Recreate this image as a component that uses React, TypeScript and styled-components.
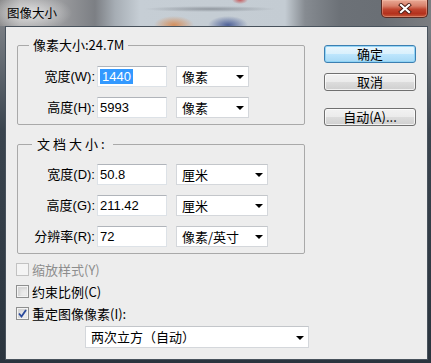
import React from "react";
import styled, { createGlobalStyle, css } from "styled-components";

const GlobalStyle = createGlobalStyle`
  html, body {
    margin: 0;
    padding: 0;
  }
  body {
    width: 431px;
    height: 363px;
    overflow: hidden;
    background: #2b3540;
    font-family: "Liberation Sans", "Noto Sans CJK SC", sans-serif;
    font-size: 13px;
    color: #000;
  }
`;

const Window = styled.div`
  width: 431px;
  height: 363px;
  display: flex;
  flex-direction: column;
  background: linear-gradient(
    to bottom,
    #8a8c8f 0,
    #6b7178 50px,
    #3a444e 130px,
    #2a343e 100%
  );
`;

const TitleBar = styled.div`
  height: 26px;
  flex: none;
  display: flex;
  align-items: flex-start;
  justify-content: space-between;
  background:
    radial-gradient(ellipse 42px 18px at 30px 13px, rgba(235, 235, 235, 0.85), rgba(235, 235, 235, 0)),
    radial-gradient(ellipse 20px 9px at 174px 25px, rgba(214, 140, 86, 0.95), rgba(214, 140, 86, 0)),
    radial-gradient(ellipse 20px 9px at 228px 25px, rgba(66, 86, 146, 0.9), rgba(66, 86, 146, 0)),
    radial-gradient(ellipse 8px 4px at 240px 0px, rgba(200, 60, 60, 0.8), rgba(200, 60, 60, 0)),
    radial-gradient(ellipse 66px 3px at 210px 9px, rgba(110, 116, 124, 0.6), rgba(110, 116, 124, 0)),
    linear-gradient(
      to right,
      #8c8c8d 0,
      #a9a9aa 20px,
      #9a9b9e 60px,
      #7c7f84 95px,
      #a6adb4 115px,
      #c6ced5 140px,
      #c4ccd3 285px,
      #868b91 305px,
      #6c7177 340px,
      #6a6f75 380px,
      #7b7d80 431px
    );
`;

const Title = styled.span`
  margin: 5px 0 0 7px;
  font-family: "Noto Sans CJK SC", sans-serif;
  font-size: 12.5px;
  line-height: 16px;
  color: #000;
`;

const CloseButton = styled.div`
  width: 47px;
  height: 18px;
  margin-right: 3px;
  box-sizing: border-box;
  border: 1px solid #5a2a22;
  border-top: none;
  border-radius: 0 0 5px 5px;
  display: flex;
  align-items: center;
  justify-content: center;
  background: linear-gradient(
    to bottom,
    #e9a995 0,
    #d8806a 35%,
    #c0452f 55%,
    #b4311d 80%,
    #c45a3c 100%
  );
  box-shadow: inset 0 0 0 1px rgba(255, 210, 190, 0.35);
`;

const Client = styled.div`
  flex: 1;
  margin: 0 3px 3px 5px;
  border: 1px solid #48525c;
  background: #ededed;
  display: flex;
`;

const MainColumn = styled.div`
  padding: 10px 0 0 11px;
  width: 288px;
  display: flex;
  flex-direction: column;
`;

const Group = styled.fieldset`
  margin: 0;
  padding: 13px 0 6px 0;
  width: 288px;
  box-sizing: border-box;
  border: 1px solid #a9a9a9;
  border-radius: 2px;
  display: flex;
  flex-direction: column;
  gap: 10px;

  & + & {
    margin-top: 11px;
    padding-top: 12px;
  }
`;

const Legend = styled.legend<{ $spaced?: boolean }>`
  margin-left: ${(p) => (p.$spaced ? 14 : 11)}px;
  padding: 0 ${(p) => (p.$spaced ? 5 : 4)}px;
  font-family: "Noto Sans CJK SC", sans-serif;
  font-size: 13px;
  line-height: 16px;
  letter-spacing: ${(p) => (p.$spaced ? "3px" : "0")};
  color: #000;
`;

const Row = styled.div`
  display: flex;
  align-items: center;
  height: 21px;
`;

const Label = styled.span`
  width: 77px;
  margin-right: 2px;
  text-align: right;
  font-family: "Liberation Sans", "Noto Sans CJK SC", sans-serif;
  font-size: 13px;
  line-height: 16px;
  white-space: nowrap;
`;

const Field = styled.div`
  width: 70px;
  height: 21px;
  box-sizing: border-box;
  margin-right: 9px;
  padding-left: 2px;
  background: #fff;
  border: 1px solid #dde2e7;
  border-top-color: #b0b4ba;
  display: flex;
  align-items: center;
  font-size: 13px;
  line-height: 15px;
`;

const Selected = styled.span`
  background: #3399ff;
  color: #fff;
  padding: 0 2px;
`;

const FieldText = styled.span`
  padding-left: 0;
`;

const Select = styled.div<{ $width: number }>`
  width: ${(p) => p.$width}px;
  height: ${(p) => (p.$width > 200 ? 22 : 21)}px;
  box-sizing: border-box;
  padding: 0 4px 0 5px;
  background: #fff;
  border: 1px solid #d4d7db;
  border-top-color: #c3c6ca;
  display: flex;
  align-items: center;
  justify-content: space-between;
  font-family: "Noto Sans CJK SC", sans-serif;
  font-size: 13px;
  line-height: 16px;
`;

const Arrow = styled.span`
  width: 0;
  height: 0;
  border-left: 4px solid transparent;
  border-right: 4px solid transparent;
  border-top: 4px solid #000;
  margin-top: 1px;
`;

const CheckList = styled.div`
  margin: 9px 0 0 -1px;
  display: flex;
  flex-direction: column;
  gap: 9px;
`;

const CheckRow = styled.div<{ $disabled?: boolean }>`
  display: flex;
  align-items: center;
  height: 13px;
  gap: 3px;
  font-family: "Noto Sans CJK SC", sans-serif;
  font-size: 13px;
  line-height: 13px;
  color: ${(p) => (p.$disabled ? "#8d8d8d" : "#000")};
  white-space: nowrap;
`;

const Box = styled.span<{ $disabled?: boolean }>`
  width: 13px;
  height: 13px;
  box-sizing: border-box;
  flex: none;
  border: 1px solid ${(p) => (p.$disabled ? "#c2c2c2" : "#8e8f8f")};
  display: flex;
  align-items: center;
  justify-content: center;
  background: #fff;
  ${(p) =>
    !p.$disabled &&
    css`
      box-shadow: inset 0 0 0 1px #f4f4f4, inset 1px 1px 2px 2px #d6d6d6;
      background: linear-gradient(135deg, #d8d8d8, #f6f6f6);
    `}
  ${(p) =>
    p.$disabled &&
    css`
      background: #f4f4f4;
    `}
`;

const Resample = styled.div`
  margin: 6px 0 0 68px;
`;

const ButtonColumn = styled.div`
  margin: 18px 0 0 19px;
  display: flex;
  flex-direction: column;
`;

const Button = styled.div<{ $primary?: boolean; $gap: number }>`
  width: 92px;
  height: 18px;
  margin-top: ${(p) => p.$gap}px;
  box-sizing: border-box;
  border-radius: 3px;
  display: flex;
  align-items: center;
  justify-content: center;
  font-family: "Noto Sans CJK SC", sans-serif;
  font-size: 13px;
  line-height: 16px;
  border: 1px solid ${(p) => (p.$primary ? "#3c7fb1" : "#707070")};
  background: ${(p) =>
    p.$primary
      ? "linear-gradient(to bottom, #eaf6fd 0, #d9f0fc 50%, #bee6fd 50%, #a7d9f5 100%)"
      : "linear-gradient(to bottom, #f2f2f2 0, #ebebeb 50%, #dddddd 50%, #cfcfcf 100%)"};
  box-shadow: inset 0 0 0 1px
    ${(p) => (p.$primary ? "rgba(140, 210, 245, 0.9)" : "rgba(255, 255, 255, 0.7)")};
`;

function CloseGlyph() {
  return (
    <svg width="14" height="11" viewBox="0 0 14 11">
      <path d="M3 2 L11 9 M11 2 L3 9" stroke="#4a1c14" strokeWidth="4" strokeLinecap="square" />
      <path d="M3 2 L11 9 M11 2 L3 9" stroke="#ffffff" strokeWidth="2.2" strokeLinecap="square" />
    </svg>
  );
}

function Check() {
  return (
    <svg width="9" height="9" viewBox="0 0 9 9">
      <path d="M1 4.5 L3.5 7.5 L8 1" stroke="#2a4a9c" strokeWidth="1.8" fill="none" />
    </svg>
  );
}

const pixelRows = [
  { label: "宽度(W):", value: "1440", unit: "像素", selected: true },
  { label: "高度(H):", value: "5993", unit: "像素", selected: false },
];

const docRows = [
  { label: "宽度(D):", value: "50.8", unit: "厘米" },
  { label: "高度(G):", value: "211.42", unit: "厘米" },
  { label: "分辨率(R):", value: "72", unit: "像素/英寸" },
];

export default function App() {
  return (
    <>
      <GlobalStyle />
      <Window>
        <TitleBar>
          <Title>图像大小</Title>
          <CloseButton>
            <CloseGlyph />
          </CloseButton>
        </TitleBar>
        <Client>
          <MainColumn>
            <Group>
              <Legend>像素大小:24.7M</Legend>
              {pixelRows.map((row) => (
                <Row key={row.label}>
                  <Label>{row.label}</Label>
                  <Field>
                    {row.selected ? <Selected>{row.value}</Selected> : <FieldText>{row.value}</FieldText>}
                  </Field>
                  <Select $width={73}>
                    {row.unit}
                    <Arrow />
                  </Select>
                </Row>
              ))}
            </Group>
            <Group>
              <Legend $spaced>文档大小:</Legend>
              {docRows.map((row) => (
                <Row key={row.label}>
                  <Label>{row.label}</Label>
                  <Field>
                    <FieldText>{row.value}</FieldText>
                  </Field>
                  <Select $width={92}>
                    {row.unit}
                    <Arrow />
                  </Select>
                </Row>
              ))}
            </Group>
            <CheckList>
              <CheckRow $disabled>
                <Box $disabled />
                缩放样式(Y)
              </CheckRow>
              <CheckRow>
                <Box />
                约束比例(C)
              </CheckRow>
              <CheckRow>
                <Box>
                  <Check />
                </Box>
                重定图像像素(I):
              </CheckRow>
            </CheckList>
            <Resample>
              <Select $width={224}>
                两次立方（自动）
                <Arrow />
              </Select>
            </Resample>
          </MainColumn>
          <ButtonColumn>
            <Button $primary $gap={0}>
              确定
            </Button>
            <Button $gap={10}>取消</Button>
            <Button $gap={17}>自动(A)...</Button>
          </ButtonColumn>
        </Client>
      </Window>
    </>
  );
}
